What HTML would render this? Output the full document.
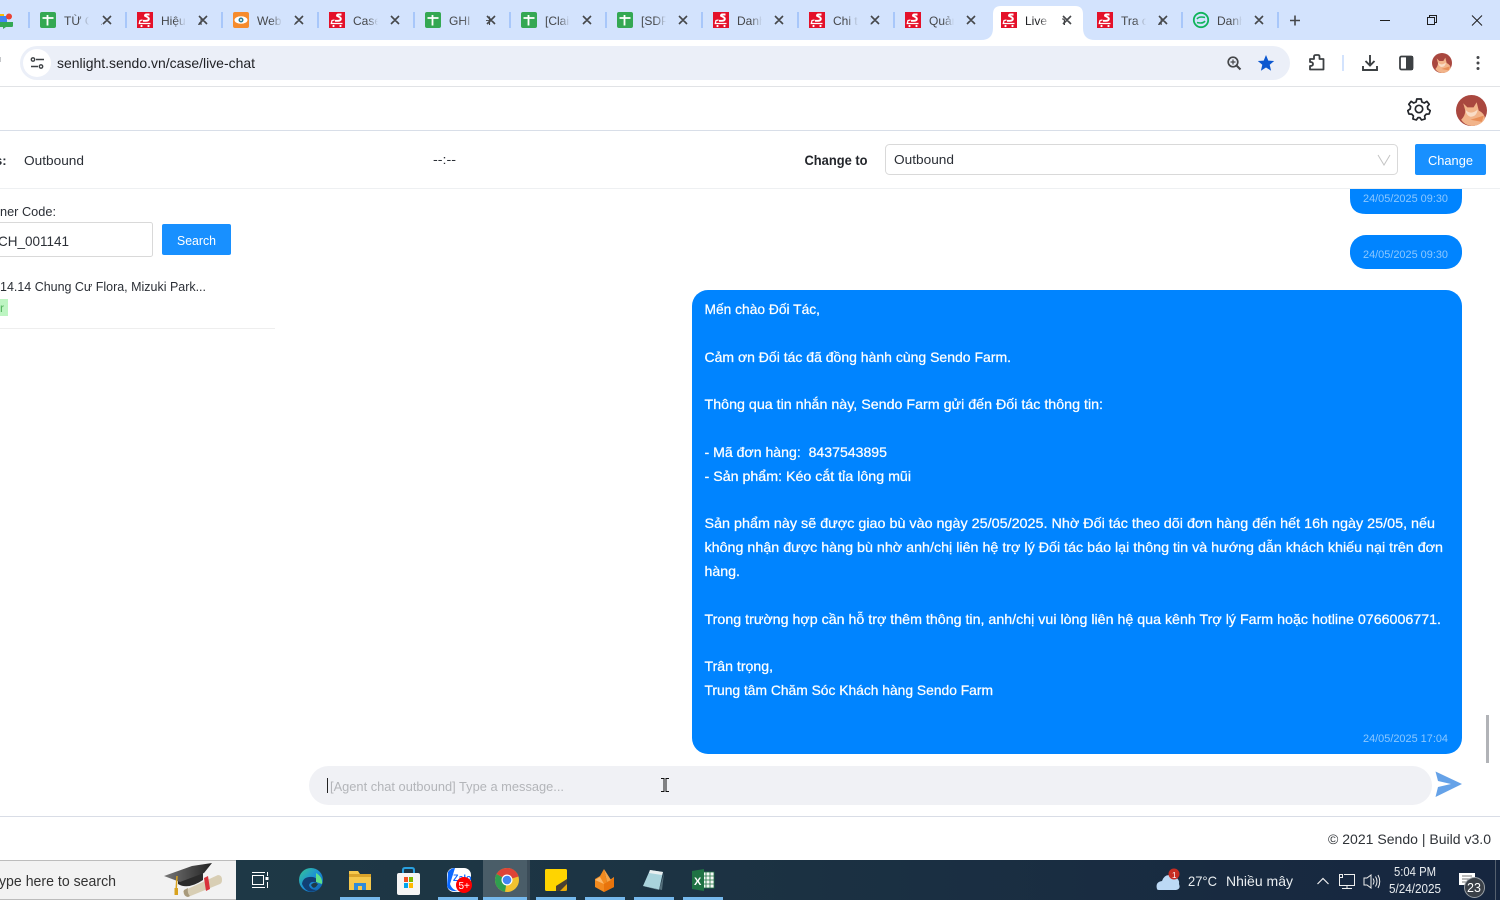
<!DOCTYPE html>
<html lang="vi"><head><meta charset="utf-8"><title>Live Chat</title>
<style>
html,body{margin:0;padding:0;width:1500px;height:900px;overflow:hidden;background:#fff}
svg{position:absolute;left:0;top:0;display:block}
text{font-family:"Liberation Sans","Noto Sans CJK SC",sans-serif}
.t{font-size:12px;fill:#45474a}
.m{font-size:14px;fill:#fff;font-weight:400;stroke:#fff;stroke-width:.25px}
.b{font-size:13px;fill:#2b2f36}
.x{stroke:#45474a;stroke-width:1.600;fill:none}
.tm{font-size:11px;fill:#8cc8ff}
.w{font-size:13px;fill:#e9edf0}
</style></head><body>
<svg width="1500" height="900" viewBox="0 0 1500 900" xmlns="http://www.w3.org/2000/svg">
<defs>
<symbol id="sen" viewBox="0 0 16 16"><rect width="16" height="16" fill="#e4112a"/><path d="M12.500 2.500H9.500Q7.800 2.500 8 3.800L10.800 5.300Q12.300 6.300 11.600 7.800Q11 8.800 9 8.800H6" stroke="#fff" stroke-width="1.900" fill="none"/><path d="M5.500 8L3 8.500L2.300 11.500H13.500" stroke="#fff" stroke-width="1.300" fill="none"/><circle cx="4.500" cy="14" r="1.100" fill="#fff"/><circle cx="11.500" cy="14" r="1.100" fill="#fff"/></symbol>
<symbol id="sh" viewBox="0 0 16 16"><rect width="16" height="16" rx="2" fill="#34a853"/><path d="M2.500 6H13.500M7.500 3V13.500" stroke="#fff" stroke-width="1.800" fill="none"/></symbol>
<symbol id="cat" viewBox="0 0 30 30"><circle cx="15" cy="15" r="15" fill="#a9473f"/><path d="M7 8L11 12H17L20 7L22 15Q28 18 28 23Q24 30 15 30Q8 29 5 24Q9 20 9 15Z" fill="#f2b48a"/><path d="M9 14Q14 20 21 14Q20 21 14 21Q10 20 9 14Z" fill="#f9dcc6"/><path d="M14 24L27 20L25 26Z" fill="#e98f58"/></symbol>
<linearGradient id="fd" x1="0" x2="1" y1="0" y2="0"><stop offset="0" stop-color="#d3e3fd" stop-opacity="0"/><stop offset=".7" stop-color="#d3e3fd"/></linearGradient>
<linearGradient id="fw" x1="0" x2="1" y1="0" y2="0"><stop offset="0" stop-color="#fff" stop-opacity="0"/><stop offset=".7" stop-color="#fff"/></linearGradient>
<linearGradient id="tb" x1="0" x2="1" y1="0" y2="0"><stop offset="0" stop-color="#1f3b47"/><stop offset=".45" stop-color="#1c3343"/><stop offset="1" stop-color="#16263f"/></linearGradient>
<linearGradient id="edge" x1="0" x2="1" y1="0" y2="1"><stop offset="0" stop-color="#36c98f"/><stop offset=".5" stop-color="#1c8fd8"/><stop offset="1" stop-color="#0d5aa8"/></linearGradient>
<linearGradient id="cap" x1="0" x2="1" y1="0" y2="0"><stop offset="0" stop-color="#777"/><stop offset="1" stop-color="#222"/></linearGradient>
</defs>

<!-- tab strip -->
<rect width="1500" height="40" fill="#d3e3fd"/>
<g fill="#a8c7fa">
<rect x="28" y="12" width="2" height="16"/><rect x="125" y="12" width="2" height="16"/><rect x="221" y="12" width="2" height="16"/><rect x="317" y="12" width="2" height="16"/><rect x="413" y="12" width="2" height="16"/><rect x="509" y="12" width="2" height="16"/><rect x="605" y="12" width="2" height="16"/><rect x="701" y="12" width="2" height="16"/><rect x="797" y="12" width="2" height="16"/><rect x="893" y="12" width="2" height="16"/><rect x="1181" y="12" width="2" height="16"/><rect x="1277" y="12" width="2" height="16"/>
</g>
<!-- cut-off app icon -->
<path d="M0 22H13V26Q13 27 11 27H6L3 29V27H0Z" fill="#34a853"/><rect x="0" y="14" width="4" height="6" fill="#fbbc04"/><rect x="0" y="16" width="7" height="6" fill="#4285f4"/><circle cx="9" cy="16.500" r="3" fill="#ea4335"/>

<!-- active tab -->
<path d="M981 40Q993 40 993 28V14Q993 6 1001 6H1075Q1083 6 1083 14V28Q1083 40 1095 40Z" fill="#fff"/>

<use href="#sh" x="40" y="12" width="16" height="16"/>
<use href="#sen" x="137" y="12" width="16" height="16"/>
<g><rect x="233" y="12" width="16" height="16" rx="2" fill="#f68b2c"/><ellipse cx="241" cy="20" rx="6.500" ry="3.800" fill="#fff"/><circle cx="241" cy="20" r="2.500" fill="#2f7f93"/><circle cx="241" cy="20" r="1" fill="#fff"/></g>
<use href="#sen" x="329" y="12" width="16" height="16"/>
<use href="#sh" x="425" y="12" width="16" height="16"/>
<use href="#sh" x="521" y="12" width="16" height="16"/>
<use href="#sh" x="617" y="12" width="16" height="16"/>
<use href="#sen" x="713" y="12" width="16" height="16"/>
<use href="#sen" x="809" y="12" width="16" height="16"/>
<use href="#sen" x="905" y="12" width="16" height="16"/>
<use href="#sen" x="1001" y="12" width="16" height="16"/>
<use href="#sen" x="1097" y="12" width="16" height="16"/>
<g fill="none" stroke="#0fb45a"><circle cx="1201" cy="20" r="7.200" stroke-width="1.800"/><path d="M1197 19Q1199 16 1205 17.500M1205 21Q1203 24 1197 22.500" stroke-width="1.600"/></g>

<text class="t" x="64" y="25">TỪ CÁ</text>
<text class="t" x="161" y="25">Hiệu qu</text>
<text class="t" x="257" y="25">Webha</text>
<text class="t" x="353" y="25">Case li</text>
<text class="t" x="449" y="25">GHI CH</text>
<text class="t" x="545" y="25">[Claim</text>
<text class="t" x="641" y="25">[SDP]</text>
<text class="t" x="737" y="25">Danh</text>
<text class="t" x="833" y="25">Chi tiết</text>
<text class="t" x="929" y="25">Quản</text>
<text class="t" x="1025" y="25" style="fill:#1f2023">Live Ch</text>
<text class="t" x="1121" y="25">Tra cứu</text>
<text class="t" x="1217" y="25">Danh</text>
<g fill="url(#fd)">
<rect x="78" y="8" width="16" height="24"/><rect x="175" y="8" width="16" height="24"/><rect x="271" y="8" width="16" height="24"/><rect x="367" y="8" width="16" height="24"/><rect x="463" y="8" width="16" height="24"/><rect x="559" y="8" width="16" height="24"/><rect x="655" y="8" width="16" height="24"/><rect x="751" y="8" width="16" height="24"/><rect x="847" y="8" width="16" height="24"/><rect x="943" y="8" width="16" height="24"/><rect x="1135" y="8" width="16" height="24"/><rect x="1231" y="8" width="16" height="24"/>
</g>
<rect x="1039" y="8" width="16" height="24" fill="url(#fw)"/>
<g fill="#d3e3fd"><rect x="91" y="8" width="10" height="24"/><rect x="188" y="8" width="10" height="24"/><rect x="284" y="8" width="10" height="24"/><rect x="380" y="8" width="10" height="24"/><rect x="476" y="8" width="10" height="24"/><rect x="572" y="8" width="10" height="24"/><rect x="668" y="8" width="10" height="24"/><rect x="764" y="8" width="10" height="24"/><rect x="860" y="8" width="10" height="24"/><rect x="956" y="8" width="10" height="24"/><rect x="1148" y="8" width="10" height="24"/><rect x="1244" y="8" width="10" height="24"/></g>
<rect x="1052" y="8" width="10" height="24" fill="#fff"/>
<path class="x" d="M103 16L111 24M111 16L103 24M199 16L207 24M207 16L199 24M295 16L303 24M303 16L295 24M391 16L399 24M399 16L391 24M487 16L495 24M495 16L487 24M583 16L591 24M591 16L583 24M679 16L687 24M687 16L679 24M775 16L783 24M783 16L775 24M871 16L879 24M879 16L871 24M967 16L975 24M975 16L967 24M1063 16L1071 24M1071 16L1063 24M1159 16L1167 24M1167 16L1159 24M1255 16L1263 24M1263 16L1255 24"/>
<path d="M1290 20.500H1300M1295 15.500V25.500" stroke="#45474a" stroke-width="1.600" fill="none"/>
<!-- window controls -->
<path d="M1380 20.500H1390" stroke="#1f1f1f" fill="none"/>
<path d="M1427.500 17.500H1434.500V24.500H1427.500ZM1429.500 17.500V15.500H1436.500V22.500H1434.500" stroke="#1f1f1f" fill="none"/>
<path d="M1472 15.500L1482 25.500M1482 15.500L1472 25.500" stroke="#1f1f1f" fill="none"/>

<!-- toolbar -->
<rect y="40" width="1500" height="46" fill="#fff"/>
<rect y="86" width="1500" height="1" fill="#e1e3e6"/>
<rect x="20" y="46" width="1270" height="34" rx="17" fill="#ebeff8"/>
<circle cx="37" cy="63" r="14" fill="#fff"/>
<g stroke="#3c4043" stroke-width="1.400" fill="none"><path d="M36 59.500H44M31 66.500H38"/><circle cx="33" cy="59.500" r="1.700"/><circle cx="41" cy="66.500" r="1.700"/></g>
<text x="57" y="68" textLength="198" lengthAdjust="spacingAndGlyphs" style="font-size:14px;fill:#1f2024">senlight.sendo.vn/case/live-chat</text>
<rect x="0" y="57" width="1" height="5" fill="#c5c7ca"/>
<g stroke="#45474a" fill="none"><circle cx="1233" cy="62" r="4.800" stroke-width="1.700"/><path d="M1236.500 65.500L1240.500 69.500" stroke-width="2"/><path d="M1233 59.500V64.500M1230.500 62H1235.500" stroke-width="1.200"/></g>
<path d="M1266 55L1268.300 60.600L1274.200 61L1269.700 64.800L1271.100 70.700L1266 67.500L1260.900 70.700L1262.300 64.800L1257.800 61L1263.700 60.600Z" fill="#0b57d0"/>
<path d="M1310 59H1314V56.500Q1314 55 1316 55H1318Q1319.500 55 1319.500 56.500V59H1323.500V69.500H1310V66Q1313 66 1313 64Q1313 62 1310 62Z" fill="none" stroke="#3c4043" stroke-width="1.800" stroke-linejoin="round"/>
<rect x="1342" y="55" width="2" height="16" fill="#d3e3fd"/>
<path d="M1370 55V65M1365.500 61L1370 65.500L1374.500 61M1363 66V70H1377V66" stroke="#3c4043" stroke-width="1.900" fill="none"/>
<rect x="1400" y="56.500" width="12.500" height="13" rx="1.500" fill="none" stroke="#3c4043" stroke-width="1.800"/><rect x="1406" y="56" width="7" height="14" fill="#3c4043"/>
<use href="#cat" x="1432" y="53" width="20" height="20"/>
<g fill="#45474a"><circle cx="1478" cy="57.500" r="1.500"/><circle cx="1478" cy="63" r="1.500"/><circle cx="1478" cy="68.500" r="1.500"/></g>

<!-- app header -->
<rect y="87" width="1500" height="43" fill="#fff"/>
<rect y="130" width="1500" height="1" fill="#d8dee8"/>
<g fill="none" stroke="#23262b" stroke-width="1.700"><path d="M1416.800 99H1421.200L1421.900 102L1424.300 103L1426.900 101.400L1429.200 104.300L1427.400 106.600L1427.800 109L1430.200 110.600L1429.100 114L1426.300 114.100L1424.600 116L1425.100 118.900L1421.600 120L1419.900 117.600H1418L1416.300 120L1412.900 118.900L1413.400 116L1411.700 114.100L1408.900 114L1407.800 110.600L1410.200 109L1410.600 106.600L1408.800 104.300L1411.100 101.400L1413.700 103L1416.100 102Z" stroke-linejoin="round"/><circle cx="1419" cy="109" r="3.700"/></g>
<use href="#cat" x="1456" y="95" width="31" height="31"/>

<!-- status bar -->
<rect y="188" width="1500" height="1" fill="#eef0f2"/>
<text x="-5" y="165" style="font-size:13px;font-weight:700;fill:#2b2f36">s:</text>
<text class="b" x="24" y="165" textLength="60" lengthAdjust="spacingAndGlyphs">Outbound</text>
<text x="433" y="164" style="font-size:13px;fill:#2b2f36" textLength="23" lengthAdjust="spacingAndGlyphs">--:--</text>
<text x="804.500" y="165" textLength="63" lengthAdjust="spacingAndGlyphs" style="font-size:14px;font-weight:700;fill:#23262b">Change to</text>
<rect x="885.500" y="144.500" width="512" height="30" rx="4" fill="#fff" stroke="#d9d9d9"/>
<text class="b" x="894" y="164" textLength="60" lengthAdjust="spacingAndGlyphs">Outbound</text>
<path d="M1378 155L1384 165L1390 155" fill="none" stroke="#c4c4c4"/>
<rect x="1415" y="144" width="71" height="31" rx="2" fill="#1890ff"/>
<text x="1428" y="165" textLength="45" lengthAdjust="spacingAndGlyphs" style="font-size:13px;fill:#fff">Change</text>

<!-- left panel -->
<text class="b" x="0" y="216" textLength="56" lengthAdjust="spacingAndGlyphs" style="font-size:12.500px">ner Code:</text>
<rect x="-4.500" y="222.500" width="157" height="34" rx="2" fill="#fff" stroke="#d9d9d9"/>
<text x="-2" y="246" textLength="71" lengthAdjust="spacingAndGlyphs" style="font-size:14px;fill:#2b2f36">CH_001141</text>
<rect x="162" y="224" width="69" height="31" rx="2" fill="#1890ff"/>
<text x="177" y="245" textLength="39" lengthAdjust="spacingAndGlyphs" style="font-size:13px;fill:#fff">Search</text>
<text class="b" x="0" y="291" textLength="206" lengthAdjust="spacingAndGlyphs">14.14 Chung Cư Flora, Mizuki Park...</text>
<rect x="0" y="299" width="8" height="17" fill="#bdf5c2"/>
<text x="0" y="312" style="font-size:12px;fill:#52b35c">r</text>
<rect x="0" y="328" width="275" height="1" fill="#eeeeee"/>

<!-- messages -->
<path d="M1350 189H1462V198Q1462 214 1446 214H1366Q1350 214 1350 198Z" fill="#0084ff"/>
<text class="tm" x="1363" y="202" textLength="85" lengthAdjust="spacingAndGlyphs">24/05/2025 09:30</text>
<rect x="1350" y="235" width="112" height="34" rx="16" fill="#0084ff"/>
<text class="tm" x="1363" y="258" textLength="85" lengthAdjust="spacingAndGlyphs">24/05/2025 09:30</text>
<rect x="692" y="290" width="770" height="464" rx="16" fill="#0084ff"/>
<text class="m" x="704.500" y="314" textLength="115.500" lengthAdjust="spacingAndGlyphs">Mến chào Đối Tác,</text>
<text class="m" x="704.500" y="362" textLength="306.500" lengthAdjust="spacingAndGlyphs">Cảm ơn Đối tác đã đồng hành cùng Sendo Farm.</text>
<text class="m" x="704.500" y="409" textLength="398.500" lengthAdjust="spacingAndGlyphs">Thông qua tin nhắn này, Sendo Farm gửi đến Đối tác thông tin:</text>
<text class="m" x="704.500" y="457" textLength="182.500" lengthAdjust="spacingAndGlyphs">- Mã đơn hàng:&#160; 8437543895</text>
<text class="m" x="704.500" y="481" textLength="206.500" lengthAdjust="spacingAndGlyphs">- Sản phẩm: Kéo cắt tỉa lông mũi</text>
<text class="m" x="704.500" y="528" textLength="730.500" lengthAdjust="spacingAndGlyphs">Sản phẩm này sẽ được giao bù vào ngày 25/05/2025. Nhờ Đối tác theo dõi đơn hàng đến hết 16h ngày 25/05, nếu</text>
<text class="m" x="704.500" y="552" textLength="738.500" lengthAdjust="spacingAndGlyphs">không nhận được hàng bù nhờ anh/chị liên hệ trợ lý Đối tác báo lại thông tin và hướng dẫn khách khiếu nại trên đơn</text>
<text class="m" x="704.500" y="576" textLength="35.500" lengthAdjust="spacingAndGlyphs">hàng.</text>
<text class="m" x="704.500" y="624" textLength="736.500" lengthAdjust="spacingAndGlyphs">Trong trường hợp cần hỗ trợ thêm thông tin, anh/chị vui lòng liên hệ qua kênh Trợ lý Farm hoặc hotline 0766006771.</text>
<text class="m" x="704.500" y="671" textLength="68.500" lengthAdjust="spacingAndGlyphs">Trân trọng,</text>
<text class="m" x="704.500" y="695" textLength="288.500" lengthAdjust="spacingAndGlyphs">Trung tâm Chăm Sóc Khách hàng Sendo Farm</text>
<text class="tm" x="1363" y="742" textLength="85" lengthAdjust="spacingAndGlyphs">24/05/2025 17:04</text>
<rect x="1486" y="715" width="3" height="48" fill="#b1b3b7"/>

<!-- input -->
<rect x="309" y="766" width="1123" height="39" rx="19.500" fill="#f0f1f5"/>
<rect x="327" y="778" width="1" height="15" fill="#222"/>
<text x="330" y="791" textLength="234" lengthAdjust="spacingAndGlyphs" style="font-size:13px;fill:#b3b5b9">[Agent chat outbound] Type a message...</text>
<path d="M1435.500 771.500L1462 784L1435.500 797L1438 787L1451 784L1438 781Z" fill="#65a2e8"/>
<path d="M661 778.500H664V791.500H661M669 778.500H666V791.500H669" stroke="#111" fill="none"/>

<!-- footer -->
<rect y="816" width="1500" height="1" fill="#d9dde6"/>
<text x="1328" y="844" textLength="163" lengthAdjust="spacingAndGlyphs" style="font-size:14px;fill:#2f3338">© 2021 Sendo | Build v3.0</text>

<!-- taskbar -->
<rect y="860" width="1500" height="40" fill="url(#tb)"/>
<rect y="860" width="236" height="40" fill="#f2f2f2"/>
<rect y="860" width="236" height="1" fill="#bcbcbc"/><rect y="899" width="236" height="1" fill="#bcbcbc"/>
<text x="-1" y="886" textLength="117" lengthAdjust="spacingAndGlyphs" style="font-size:14.500px;fill:#333">ype here to search</text>
<!-- graduation cap and scroll -->
<path d="M183 891L218 875Q222 875 222 880Q222 883 220 884L188 897Q184 897 183 891Z" fill="#d8ceb4"/>
<path d="M188 897Q183 896 184 890L188 888Q187 893 190 896Z" fill="#a89a7c"/>
<path d="M204 878L208 876L210 889L206 891Z" fill="#d9323a"/>
<path d="M178 878L178 884Q188 890 203 880V872Z" fill="#2b2b2b"/>
<path d="M164 876L192 866L212 863L204 873L180 882Z" fill="url(#cap)"/>
<path d="M177 876L176 892" stroke="#d8a21e" stroke-width="1.500"/><rect x="174.500" y="888" width="3.500" height="7" fill="#d8a21e"/>

<!-- task view -->
<g fill="none" stroke="#fff" stroke-width="1"><rect x="252.500" y="875.500" width="11" height="9"/><path d="M252 872.500H265M252 887.500H265M267.500 872V876M267.500 882V888"/></g><rect x="265.500" y="877" width="3" height="3" fill="#fff"/>
<!-- edge -->
<circle cx="311" cy="880" r="12" fill="url(#edge)"/><path d="M302 884Q303 876 313 877Q318 878 317 883Q311 880 309 885Q310 890 317 890Q307 895 302 884Z" fill="#123f75"/><path d="M311 885Q314 881 318 884Q314 891 311 885Z" fill="#1f3b47"/><path d="M316 873Q323 877 322 884L316 882Z" fill="#5ee08a"/>
<!-- explorer -->
<path d="M349 871H358L360 874H371V890H349Z" fill="#f5c84c"/><rect x="349" y="874" width="22" height="3" fill="#d9a32a"/><path d="M354 890V883H366V890Z" fill="#2e8bd8"/><rect x="358" y="886" width="4" height="4" fill="#f5c84c"/>
<!-- store -->
<rect x="397" y="873" width="23" height="22" rx="2" fill="#f5f5f5"/><path d="M403 873V870Q403 868 405 868H412Q414 868 414 870V873" fill="none" stroke="#29a1e0" stroke-width="2"/><rect x="404" y="877" width="4" height="5" fill="#f25022"/><rect x="409" y="877" width="4" height="5" fill="#7fba00"/><rect x="404" y="883" width="4" height="5" fill="#00a4ef"/><rect x="409" y="883" width="4" height="5" fill="#ffb900"/>
<!-- zalo -->
<rect x="447" y="868" width="24" height="24" rx="7" fill="#fff"/><path d="M448 872Q451 868 455 868L450 884Q452 890 458 891Q449 892 447 886Z" fill="#0a68ff"/><text x="453" y="881" style="font-size:9px;font-weight:700;fill:#0a68ff">Zalo</text><circle cx="464" cy="885" r="8" fill="#f00"/><text x="458.500" y="889" style="font-size:10px;fill:#fff">5+</text>
<!-- chrome -->
<rect x="483" y="860" width="44" height="40" fill="#4a5d68"/><rect x="527" y="860" width="3" height="40" fill="#3b4c58"/>
<circle cx="507" cy="880" r="12" fill="#f2c230"/><path d="M507 880L496.600 874A12 12 0 0 1 518.500 876.500Z" fill="#de4437"/><path d="M507 880L496.600 874A12 12 0 0 0 505 891.800Z" fill="#2f9e4f"/><circle cx="507" cy="880" r="5.500" fill="#fff"/><circle cx="507" cy="880" r="4.300" fill="#4285f4"/>
<!-- sticky -->
<rect x="545" y="869" width="22" height="22" rx="1.500" fill="#ffd400"/><path d="M567 879V889Q567 891 565 891H556V886Z" fill="#4a4032"/><path d="M567 884V889Q567 891 565 891H560Z" fill="#e8a80a"/>
<!-- fox -->
<path d="M604 869L600 876L595 879V887L604 892L614 887V877L607 882Z" fill="#f28a1e"/><path d="M600 877L604 884L595 880Z" fill="#fbb96b"/><path d="M604 884L614 878L614 887L604 892Z" fill="#e8740c"/><path d="M607 882L604 869L611 880Z" fill="#f9a445"/>
<!-- notepad -->
<path d="M650 870L663 872L659 890L643 886Z" fill="#a9d3dc"/><path d="M650 870L663 872L662 875L649 873Z" fill="#e8eef0"/><path d="M643 886L659 890L664 873L662 890Z" fill="#55707c"/>
<!-- excel -->
<rect x="702" y="872" width="12" height="16" fill="#f5f8f5" stroke="#1f7244" stroke-width=".8"/><path d="M706 872V888M710 872V888M702 876H714M702 880H714M702 884H714" stroke="#1f7244" stroke-width=".8"/><path d="M692 871L704 869V891L692 889Z" fill="#1f7244"/><text x="694" y="885" style="font-size:11px;font-weight:700;fill:#fff">X</text>
<!-- running indicators -->
<g fill="#76b9ed"><rect x="340" y="897" width="40" height="3"/><rect x="438" y="897" width="40" height="3"/><rect x="483" y="897" width="44" height="3"/><rect x="536" y="897" width="40" height="3"/><rect x="585" y="897" width="40" height="3"/><rect x="634" y="897" width="40" height="3"/><rect x="683" y="897" width="40" height="3"/></g>

<!-- tray -->
<path d="M1157 889Q1155 882 1162 881Q1165 873 1172 876Q1180 878 1179 884Q1181 889 1176 890H1160Q1157 890 1157 889Z" fill="#bcd9f5"/>
<circle cx="1174" cy="874" r="5.500" fill="#c62d22"/><text x="1172" y="878" style="font-size:8px;fill:#fff">1</text>
<text class="w" x="1188" y="886" textLength="29" lengthAdjust="spacingAndGlyphs" style="font-size:14px">27°C</text>
<text class="w" x="1226" y="886" textLength="67" lengthAdjust="spacingAndGlyphs" style="font-size:14px">Nhiều mây</text>
<path d="M1317.500 884L1323 878.500L1328.500 884" fill="none" stroke="#eee" stroke-width="1.200"/>
<g fill="none" stroke="#eee"><path d="M1339.500 875.500V885.500H1354.500V874.500H1344M1347 885.500V888M1342 888.500H1352"/><rect x="1339.500" y="874.500" width="3" height="3"/></g>
<g fill="none" stroke="#eee"><path d="M1364 878V885H1367L1371 888V875L1367 878Z"/><path d="M1373 878.500Q1375 881.500 1373 884.500M1375.500 876.500Q1378.500 881.500 1375.500 886.500M1378 875Q1381.500 881.500 1378 888"/></g>
<text class="w" x="1394" y="876" textLength="42" lengthAdjust="spacingAndGlyphs" style="font-size:12.500px">5:04 PM</text>
<text class="w" x="1389" y="893" textLength="52" lengthAdjust="spacingAndGlyphs" style="font-size:12.500px">5/24/2025</text>
<path d="M1459 873H1475V885H1470L1467 888V885H1459Z" fill="#fff"/><path d="M1462 876H1472M1462 879H1472M1462 882H1472" stroke="#777"/>
<circle cx="1474.500" cy="887.500" r="10" fill="#3a4048" stroke="#9aa0a6"/>
<text x="1467" y="892" style="font-size:12.500px;fill:#fff">23</text>
<rect x="1495" y="860" width="1" height="40" fill="#55606e"/>
</svg>
</body></html>
